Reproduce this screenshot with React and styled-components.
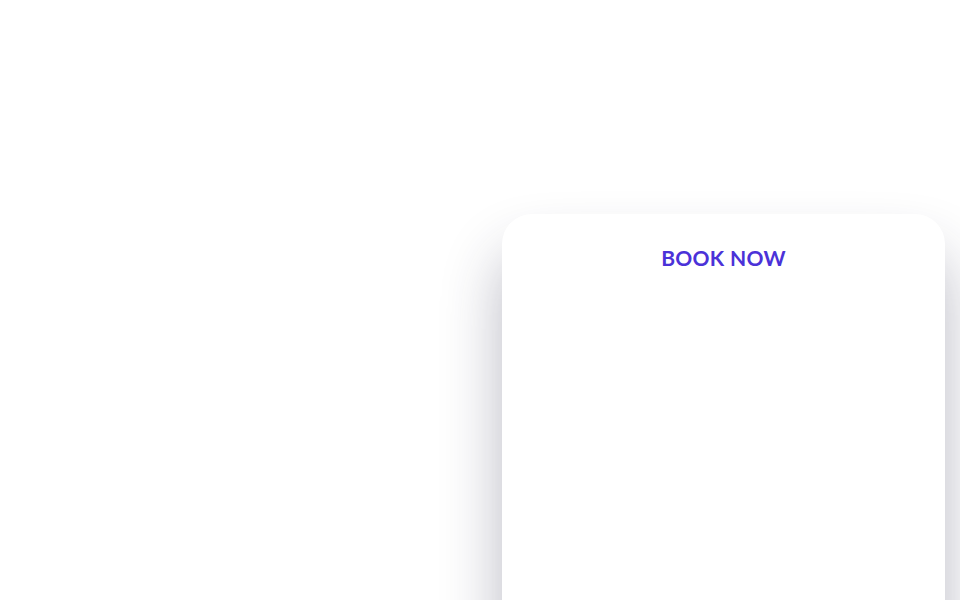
import React from "react";
import styled, { createGlobalStyle } from "styled-components";

const GlobalStyle = createGlobalStyle`
  html, body {
    margin: 0;
    padding: 0;
    background: #ffffff;
    overflow: hidden;
  }
`;

const Page = styled.div`
  width: 960px;
  height: 600px;
  overflow: hidden;
  display: flex;
  padding: 214px 0 0 502px;
  box-sizing: border-box;
`;

const Card = styled.div`
  width: 443px;
  height: 500px;
  flex-shrink: 0;
  background: #ffffff;
  border-radius: 30px;
  box-shadow: 0 40px 60px rgba(40, 40, 70, 0.32);
  display: flex;
  flex-direction: column;
  align-items: center;
  padding-top: 31px;
  box-sizing: border-box;
`;

const Title = styled.h2`
  margin: 0;
  font-family: "Lato", "Open Sans", sans-serif;
  font-weight: 700;
  font-size: 21px;
  letter-spacing: 0.3px;
  color: #4b32d8;
  line-height: 1.2;
`;

export default function App() {
  return (
    <>
      <GlobalStyle />
      <Page>
        <Card>
          <Title>BOOK NOW</Title>
        </Card>
      </Page>
    </>
  );
}
